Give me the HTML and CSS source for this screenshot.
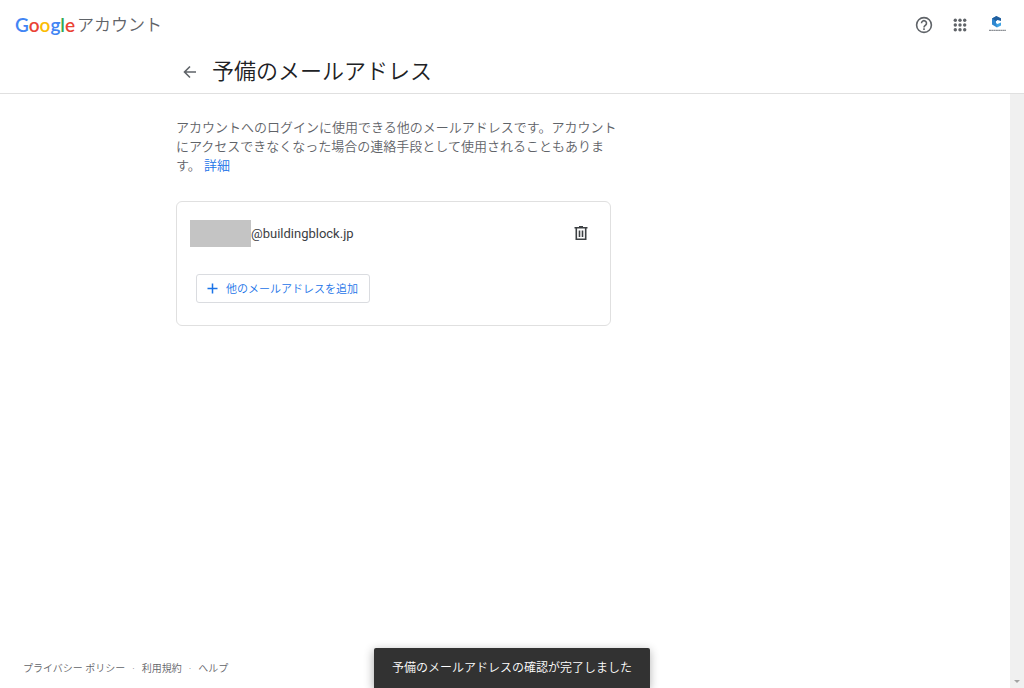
FILE: index.html
```html
<!DOCTYPE html>
<html lang="ja">
<head>
<meta charset="utf-8">
<meta name="viewport" content="width=device-width, initial-scale=1">
<title>予備のメールアドレス</title>
<link rel="stylesheet" href="styles.css">
</head>
<body>
<div class="page">
  <header class="header">
    <div class="topbar">
      <a class="brand" href="#"><span class="logo"><span class="blue">G</span><span class="red">o</span><span class="yellow">o</span><span class="blue">g</span><span class="green">l</span><span class="red">e</span></span><span class="product">アカウント</span></a>
      <div class="tools">
        <button class="icon-button" aria-label="ヘルプ">
          <svg width="18" height="18" viewBox="0 0 18 18" fill="none" stroke="#5f6368" stroke-width="1.6"><circle cx="9" cy="9" r="7.4"/><path d="M6.5 7.2a2.5 2.5 0 1 1 4.1 1.9C9.6 9.900 9 10.200 9 11.400"/><path d="M9 12.300v1.700"/></svg>
        </button>
        <button class="icon-button" aria-label="アプリ">
          <svg width="18" height="18" viewBox="0 0 18 18" fill="#5f6368"><circle cx="4.300" cy="4.300" r="1.700"/><circle cx="9" cy="4.300" r="1.700"/><circle cx="13.700" cy="4.300" r="1.700"/><circle cx="4.300" cy="9" r="1.700"/><circle cx="9" cy="9" r="1.700"/><circle cx="13.700" cy="9" r="1.700"/><circle cx="4.300" cy="13.700" r="1.700"/><circle cx="9" cy="13.700" r="1.700"/><circle cx="13.700" cy="13.700" r="1.700"/></svg>
        </button>
        <button class="icon-button" aria-label="プロフィール">
          <svg width="20" height="20" viewBox="0 0 20 20"><path d="M9.500 1 5 3.500v6l5 3V9L9 8.300V6l1-1z" fill="#2f86cf"/><path d="m9.500 1 4.500 2.300V6l-3.500-1L9 6 5 3.500z" fill="#205f9f"/><path d="m9 8.300 1.500.7L14 7.500v3l-4 2z" fill="#3fa3e4"/><path d="M2 15.300h17" stroke="#8d9196" stroke-width="1.300" stroke-dasharray="2 .3"/></svg>
        </button>
      </div>
    </div>
    <div class="titlebar">
      <button class="back" aria-label="戻る">
        <svg width="16" height="16" viewBox="0 0 16 16" fill="none" stroke="#5f6368" stroke-width="1.600"><path d="M14 8H3M8 2.500 2.500 8 8 13.500"/></svg>
      </button>
      <h1 class="title">予備のメールアドレス</h1>
    </div>
  </header>
  <div class="body">
    <div class="content">
      <main class="main">
        <p class="description">アカウントへのログインに使用できる他のメールアドレスです。アカウント<br>にアクセスできなくなった場合の連絡手段として使用されることもありま<br>す。 <a class="link" href="#">詳細</a></p>
        <section class="card">
          <div class="email-row">
            <span class="redacted"></span><span class="email">@buildingblock.jp</span>
            <button class="delete" aria-label="削除">
              <svg width="16" height="18" viewBox="0 0 16 18" fill="none" stroke="#3c4043" stroke-width="1.600"><path d="M3.300 3v11.200h9.400V3M1.500 2.800h13M6 1.700h4M6.500 5.500v6.500M9.500 5.500v6.500"/></svg>
            </button>
          </div>
          <button class="add"><svg width="11" height="11" viewBox="0 0 11 11" stroke="#1a73e8" stroke-width="1.500"><path d="M5.500 .5v10M.5 5.500h10"/></svg><span>他のメールアドレスを追加</span></button>
        </section>
      </main>
      <footer class="footer">
        <a href="#">プライバシー ポリシー</a><span>·</span><a href="#">利用規約</a><span>·</span><a href="#">ヘルプ</a>
      </footer>
    </div>
    <div class="scrollbar" aria-hidden="true"><span class="scroll-arrow"></span></div>
  </div>
  <div class="toast" role="status">予備のメールアドレスの確認が完了しました</div>
</div>
</body>
</html>
```
FILE: styles.css
```css
* { box-sizing: border-box; }
body {
  margin: 0;
  background: #fff;
  color: #3c4043;
  font-family: Roboto, "Noto Sans CJK JP", sans-serif;
}
a { color: inherit; text-decoration: none; }
button {
  margin: 0;
  padding: 0;
  border: 0;
  background: none;
  font: inherit;
  color: inherit;
  cursor: pointer;
}
svg { display: block; }
.page {
  position: relative;
  display: flex;
  flex-direction: column;
  min-height: 100vh;
  overflow: hidden;
}
.header { border-bottom: 1px solid #e0e0e0; }
.topbar {
  display: flex;
  align-items: center;
  justify-content: space-between;
  height: 50px;
  padding: 0 17px 0 15px;
}
.brand { display: flex; align-items: center; gap: 2px; }
.logo { font: 600 19px/24px Lato, sans-serif; }
.blue { color: #4285f4; }
.red { color: #ea4335; }
.yellow { color: #fbbc05; }
.green { color: #34a853; }
.product { font-size: 17px; line-height: 24px; font-weight: 350; color: #5f6368; }
.tools { display: flex; align-items: center; gap: 18px; }
.titlebar {
  display: flex;
  align-items: center;
  gap: 14px;
  height: 43px;
  padding-left: 182px;
}
.title { margin: 0; font-size: 22px; line-height: 32px; font-weight: 350; color: #202124; }
.body { display: flex; flex: 1; }
.content { display: flex; flex: 1; flex-direction: column; min-width: 0; }
.main { flex: 1; width: 611px; padding: 24px 0 24px 176px; }
.description {
  margin: 0;
  font-size: 13px;
  line-height: 19px;
  font-weight: 350;
  color: #5f6368;
  white-space: nowrap;
}
.link { color: #1a73e8; }
.card {
  margin-top: 26px;
  padding: 18px 21px 22px 13px;
  border: 1px solid #e0e0e0;
  border-radius: 6px;
}
.email-row { display: flex; align-items: center; }
.redacted { width: 61px; height: 27px; background: #c4c4c4; }
.email { font-size: 13px; line-height: 20px; }
.delete { margin-left: auto; }
.add {
  display: flex;
  align-items: center;
  gap: 8px;
  height: 29px;
  margin: 27px 0 0 6px;
  padding: 0 11px 1px 10px;
  border: 1px solid #dadce0;
  border-radius: 3px;
  font-size: 11px;
  font-weight: 350;
  color: #1a73e8;
}
.footer {
  display: flex;
  gap: 7px;
  padding: 0 23px 11px;
  font-size: 10px;
  line-height: 16px;
  font-weight: 350;
  color: #5f6368;
}
.scrollbar {
  display: flex;
  align-items: flex-end;
  justify-content: center;
  width: 14px;
  padding-bottom: 5px;
  background: #f0f0f0;
}
.scroll-arrow {
  border: 3px solid transparent;
  border-top-color: #a3a3a3;
  border-bottom: 0;
}
.toast {
  position: absolute;
  bottom: 0;
  left: 50%;
  transform: translateX(-50%);
  padding: 10px 18px;
  border-radius: 2px 2px 0 0;
  background: #323232;
  box-shadow: 0 2px 10px rgba(0, 0, 0, .3);
  font-size: 12px;
  line-height: 20px;
  font-weight: 350;
  color: #fff;
  white-space: nowrap;
}
```
